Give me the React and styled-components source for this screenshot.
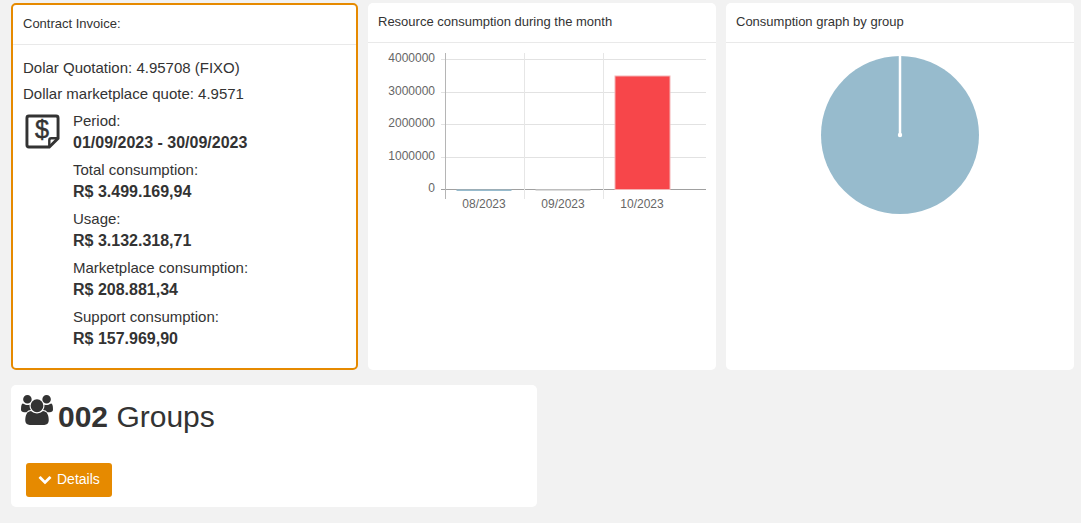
import React from 'react';
import styled, { createGlobalStyle } from 'styled-components';

const GlobalStyle = createGlobalStyle`
  html, body {
    margin: 0;
    padding: 0;
    background: #f2f2f2;
  }
  body {
    font-family: "Liberation Sans", Arial, sans-serif;
    color: #333;
  }
`;

const invoiceRows = [
  { label: 'Period:', value: '01/09/2023 - 30/09/2023' },
  { label: 'Total consumption:', value: 'R$ 3.499.169,94' },
  { label: 'Usage:', value: 'R$ 3.132.318,71' },
  { label: 'Marketplace consumption:', value: 'R$ 208.881,34' },
  { label: 'Support consumption:', value: 'R$ 157.969,90' },
];

const gridLines = [
  { y: 16.5, label: '4000000' },
  { y: 49.5, label: '3000000' },
  { y: 81.5, label: '2000000' },
  { y: 114.5, label: '1000000' },
  { y: 146.5, label: '0' },
];

const columns = [
  { x: 77.5, label: '08/2023' },
  { x: 156.5, label: '09/2023' },
  { x: 235.5, label: '10/2023' },
];

const BarChart = () => (
  <ChartSvg viewBox="0 0 348 170">
    {gridLines.map((g) => (
      <line key={g.y} x1="73" x2="338" y1={g.y} y2={g.y} stroke={g.label === '0' ? '#a0a0a0' : '#e2e2e2'} />
    ))}
    {columns.map((c, i) => (
      <line key={c.x} x1={c.x} x2={c.x} y1="10" y2="156" stroke={i === 0 ? '#b5b5b5' : '#e6e6e6'} />
    ))}
    {gridLines.map((g) => (
      <text key={g.label} x="67" y={g.y + 2.5} textAnchor="end" fontSize="12" fill="#666">{g.label}</text>
    ))}
    {columns.map((c) => (
      <text key={c.label} x={c.x + 38.5} y="165" textAnchor="middle" fontSize="12" fill="#666">{c.label}</text>
    ))}
    <rect x="88.500" y="146.500" width="55" height="1.500" fill="#97bbcd" />
    <rect x="167.500" y="146.500" width="55" height="1.500" fill="#dcdcdc" />
    <rect x="247" y="33" width="55" height="113.500" fill="#f7464a" stroke="#f4b4b5" strokeWidth="1" />
  </ChartSvg>
);

const PieChart = () => (
  <PieSvg viewBox="0 0 160 160">
    <circle cx="80" cy="80" r="79" fill="#97bbcd" />
    <line x1="80" x2="80" y1="0" y2="80" stroke="#fff" strokeWidth="2.500" />
    <circle cx="80" cy="80" r="2.200" fill="#fff" />
  </PieSvg>
);

const InvoiceIcon = () => (
  <InvoiceSvg viewBox="0 0 36 36">
    <path
      d="M4 2h28a2 2 0 0 1 2 2v21l-9 9H4a2 2 0 0 1-2-2V4a2 2 0 0 1 2-2z"
      fill="none"
      stroke="#333"
      strokeWidth="3"
    />
    <path d="M34 25h-7a2 2 0 0 0-2 2v7" fill="none" stroke="#333" strokeWidth="2.500" />
    <text x="17.500" y="25" textAnchor="middle" fontSize="26" stroke="#333" strokeWidth="0.500" fill="#333">$</text>
  </InvoiceSvg>
);

const UsersIcon = () => (
  <UsersSvg viewBox="0 0 1920 1792">
    <path d="M593 896q-162 5-265 128h-134q-82 0-138-40.500t-56-118.500q0-353 124-353 6 0 43.500 21t97.500 42.500 119 21.500q67 0 133-23-5 37-5 66 0 139 81 256zm1071 637q0 120-73 189.500t-194 69.500h-874q-121 0-194-69.500t-73-189.500q0-53 3.500-103.500t14-109 26.500-108.500 43-97.500 62-81 85.500-53.500 111.500-20q10 0 43 21.500t73 48 107 48 135 21.500 135-21.500 107-48 73-48 43-21.500q61 0 111.500 20t85.500 53.500 62 81 43 97.500 26.500 108.500 14 109 3.500 103.500zm-1024-1277q0 106-75 181t-181 75-181-75-75-181 75-181 181-75 181 75 75 181zm704 384q0 159-112.500 271.500t-271.500 112.500-271.500-112.500-112.500-271.500 112.500-271.500 271.500-112.500 271.500 112.500 112.500 271.500zm576 225q0 78-56 118.500t-138 40.500h-134q-103-123-265-128 81-117 81-256 0-29-5-66 66 23 133 23 59 0 119-21.500t97.500-42.500 43.500-21q124 0 124 353zm-128-609q0 106-75 181t-181 75-181-75-75-181 75-181 181-75 181 75 75 181z" />
  </UsersSvg>
);

const ChevronIcon = () => (
  <ChevronSvg viewBox="0 0 1792 1792">
    <path d="M1683 808l-742 741q-19 19-45 19t-45-19l-742-741q-19-19-19-45.500t19-45.500l166-165q19-19 45-19t45 19l531 531 531-531q19-19 45-19t45 19l166 165q19 19 19 45.500t-19 45.500z" />
  </ChevronSvg>
);

const App = () => (
  <Page>
    <GlobalStyle />
    <TopRow>
      <Card $highlight>
        <CardHeader>Contract Invoice:</CardHeader>
        <InvoiceBody>
          <Quote>Dolar Quotation: 4.95708 (FIXO)</Quote>
          <Quote>Dollar marketplace quote: 4.9571</Quote>
          <InvoiceDetails>
            <InvoiceIcon />
            <InvoiceList>
              {invoiceRows.map((row) => (
                <InvoiceRow key={row.label}>
                  <RowLabel>{row.label}</RowLabel>
                  <RowValue>{row.value}</RowValue>
                </InvoiceRow>
              ))}
            </InvoiceList>
          </InvoiceDetails>
        </InvoiceBody>
      </Card>
      <Card>
        <CardHeader>Resource consumption during the month</CardHeader>
        <BarChart />
      </Card>
      <Card>
        <CardHeader>Consumption graph by group</CardHeader>
        <PieBody>
          <PieChart />
        </PieBody>
      </Card>
    </TopRow>
    <BottomRow>
      <GroupCard>
        <GroupTitle>
          <UsersIcon />
          <GroupText><strong>002</strong> Groups</GroupText>
        </GroupTitle>
        <DetailsButton>
          <ChevronIcon />
          Details
        </DetailsButton>
      </GroupCard>
    </BottomRow>
  </Page>
);

const Page = styled.div`
  box-sizing: border-box;
  width: 1081px;
  height: 523px;
  padding: 3px 7px 0 11px;
  overflow: hidden;
`;

const TopRow = styled.div`
  display: grid;
  grid-template-columns: 347px 348px 348px;
  gap: 10px;
  height: 367px;
`;

const Card = styled.div`
  box-sizing: border-box;
  background: #fff;
  border-radius: 5px;
  border: ${(p) => (p.$highlight ? '2px solid #e68a00' : 'none')};
`;

const CardHeader = styled.div`
  height: 39px;
  padding: 0 10px;
  line-height: 38px;
  font-size: 13px;
  color: #333;
  border-bottom: 1px solid #e9e9e9;
`;

const InvoiceBody = styled.div`
  padding: 10px 10px 0;
`;

const Quote = styled.div`
  font-size: 15px;
  line-height: 26px;
`;

const InvoiceDetails = styled.div`
  display: flex;
  margin-top: 4px;
  padding-left: 2px;
`;

const InvoiceSvg = styled.svg`
  flex: none;
  width: 35px;
  height: 35px;
  margin-top: 3px;
`;

const InvoiceList = styled.div`
  margin-left: 13px;
`;

const InvoiceRow = styled.div`
  margin-bottom: 7px;
`;

const RowLabel = styled.div`
  font-size: 15px;
  line-height: 19px;
  margin-bottom: 2px;
`;

const RowValue = styled.div`
  font-size: 16px;
  line-height: 21px;
  font-weight: 700;
`;

const ChartSvg = styled.svg`
  display: block;
  width: 100%;
  height: 170px;
  font-family: "Liberation Sans", Arial, sans-serif;
`;

const PieBody = styled.div`
  display: flex;
  justify-content: center;
  padding-top: 12px;
`;

const PieSvg = styled.svg`
  display: block;
  width: 160px;
  height: 160px;
`;

const BottomRow = styled.div`
  display: grid;
  grid-template-columns: 526px;
  margin-top: 15px;
`;

const GroupCard = styled.div`
  box-sizing: border-box;
  height: 122px;
  padding: 10px 15px 0 10px;
  background: #fff;
  border-radius: 5px;
`;

const GroupTitle = styled.div`
  display: flex;
  align-items: flex-start;
  gap: 5px;
  height: 68px;
`;

const UsersSvg = styled.svg`
  flex: none;
  width: 32px;
  height: 30px;
  fill: #333;
`;

const GroupText = styled.div`
  font-size: 30px;
  line-height: 44px;
`;

const DetailsButton = styled.button`
  display: inline-flex;
  align-items: center;
  gap: 5px;
  height: 34px;
  margin-left: 5px;
  padding: 0 12px 2px;
  border: none;
  border-radius: 3px;
  background: #e68a00;
  color: #fff;
  font-family: inherit;
  font-size: 14px;
`;

const ChevronSvg = styled.svg`
  width: 14px;
  height: 14px;
  fill: #fff;
`;

export default App;
